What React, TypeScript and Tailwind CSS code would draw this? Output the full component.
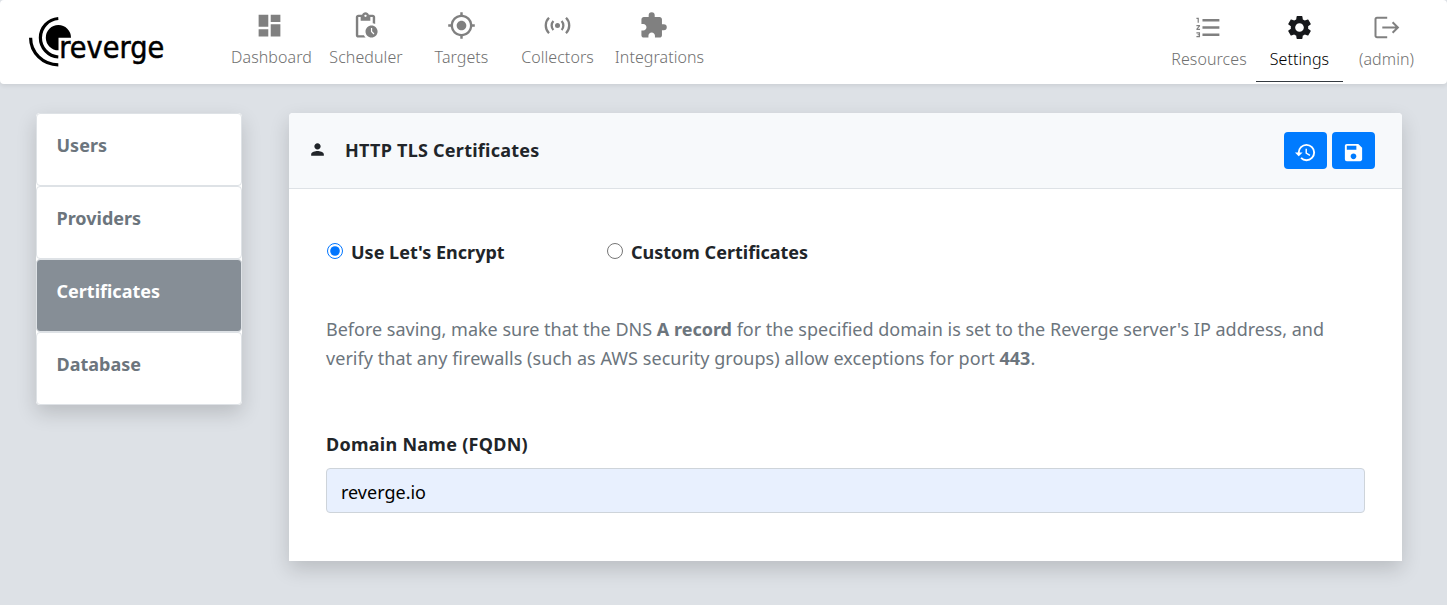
import React, { useState } from 'react';
import {
  MdDashboard,
  MdExtension,
  MdFormatListNumbered,
  MdHistory,
  MdMyLocation,
  MdPendingActions,
  MdPerson,
  MdSave,
  MdSettings,
} from 'react-icons/md';

function Logo() {
  return (
    <svg className="block h-[56px] w-[140px]" viewBox="28 14 140 56" role="img" aria-label="reverge">
      <path d="M58.5 37.7V50.3A12.6 12.6 0 1 1 71 37.7Z" fill="#000" />
      <path d="M58.3 18.5A19.3 19.3 0 0 0 58.3 57" fill="none" stroke="#000" strokeWidth="3.2" />
      <path d="M30.6 37.8A27.7 27 0 0 0 58.3 64.8" fill="none" stroke="#000" strokeWidth="3.2" />
      <text
        x="59.3"
        y="58"
        fontSize="30.5"
        textLength="105"
        lengthAdjust="spacingAndGlyphs"
        stroke="#000"
        strokeWidth="0.5"
        className="font-['DejaVu_Sans_Condensed','DejaVu_Sans',sans-serif]"
      >
        reverge
      </text>
    </svg>
  );
}

function BroadcastIcon() {
  return (
    <svg className="block size-[29px]" viewBox="0 0 29 29" fill="none" stroke="currentColor" strokeWidth="2.3">
      <circle cx="14.5" cy="14.5" r="2.5" fill="currentColor" stroke="none" />
      <path d="M10.4 10a6.6 6.6 0 0 0 0 9M18.6 10a6.6 6.6 0 0 1 0 9" />
      <path d="M6 6.8a10.8 10.8 0 0 0 0 15.4M23 6.8a10.8 10.8 0 0 1 0 15.4" />
    </svg>
  );
}

function SignOutIcon() {
  return (
    <svg className="block size-[29px]" viewBox="0 0 29 29" fill="none" stroke="currentColor" strokeWidth="2">
      <path d="M15.2 4.8H5a1.5 1.5 0 0 0-1.5 1.5v16.4A1.5 1.5 0 0 0 5 24.2h10.2" />
      <path d="M10.3 14.5h15.4M20.6 9.2l5.3 5.3-5.3 5.3" />
    </svg>
  );
}

const leftNav = [
  { label: 'Dashboard', box: 'w-[95px]', icon: <MdDashboard className="mr-1 size-[29px]" /> },
  { label: 'Scheduler', box: 'w-[94px]', icon: <MdPendingActions className="mr-0.5 size-[29px]" /> },
  { label: 'Targets', box: 'w-[97px]', icon: <MdMyLocation className="size-[29px]" /> },
  { label: 'Collectors', box: 'w-[95px]', icon: <BroadcastIcon /> },
  { label: 'Integrations', box: 'w-[109px]', icon: <MdExtension className="mr-3 size-[29px]" /> },
];

const rightNav = [
  { label: 'Resources', box: 'w-[94px]', active: false, icon: <MdFormatListNumbered className="mr-px size-[29px]" /> },
  { label: 'Settings', box: 'w-[87px]', active: true, icon: <MdSettings className="size-[29px]" /> },
  { label: '(admin)', box: 'w-[87px]', active: false, icon: <SignOutIcon /> },
];

const sections = ['Users', 'Providers', 'Certificates', 'Database'];

function Navbar() {
  return (
    <header className="flex h-[84px] justify-between rounded bg-white pr-[17px] pl-[28px] shadow-[0_2px_4px_rgba(0,0,0,0.075)]">
      <div className="flex">
        <div className="w-[196px] pt-[14px]">
          <Logo />
        </div>
        <nav className="flex text-[#808080]">
          {leftNav.map((item) => (
            <a key={item.label} href="#" className={`flex flex-col items-center pt-[11px] ${item.box}`}>
              {item.icon}
              <span className="mt-[5px] text-base leading-6 font-light tracking-[0.07px] text-[#707070]">{item.label}</span>
            </a>
          ))}
        </nav>
      </div>
      <nav className="flex">
        {rightNav.map((item) => (
          <a
            key={item.label}
            href="#"
            className={`flex h-[82px] flex-col items-center border-b pt-[13px] ${item.box} ${
              item.active ? 'border-[#343a40] text-[#16181b]' : 'border-transparent text-[#808080]'
            }`}
          >
            {item.icon}
            <span
              className={`mt-[5px] text-base leading-6 font-light tracking-[0.07px] ${
                item.active ? 'text-black' : 'text-[#707070]'
              }`}
            >
              {item.label}
            </span>
          </a>
        ))}
      </nav>
    </header>
  );
}

function Sidebar() {
  return (
    <aside className="w-[206px] shrink-0 self-start rounded bg-white shadow-[0_8px_20px_rgba(0,0,0,0.16)]">
      {sections.map((name) => (
        <a
          key={name}
          href="#"
          className={`block h-[73px] rounded border border-[#dee2e6] pt-[17px] pl-[19.5px] text-lg leading-7 font-bold ${
            name === 'Certificates' ? 'bg-[#868e96] text-white' : 'bg-white text-[#6c757d]'
          }`}
        >
          {name}
        </a>
      ))}
    </aside>
  );
}

function Certificates() {
  const [mode, setMode] = useState('letsencrypt');
  return (
    <main className="h-[448px] w-[1113px] rounded-t bg-white shadow-[0_8px_20px_rgba(0,0,0,0.16)]">
      <div className="flex h-[76px] items-center rounded-t border-b border-[#dee2e6] bg-[#f7f9fb] pr-[27px] pl-[19px]">
        <MdPerson className="mb-0.5 size-[19px]" />
        <h1 className="mb-0.5 ml-[18px] text-lg leading-7 font-bold tracking-[0.25px]">HTTP TLS Certificates</h1>
        <div className="ml-auto flex gap-[5px] text-white">
          <button className="flex h-[37px] w-[43px] items-center justify-center rounded bg-[#007bff] pt-[3px] pr-px" aria-label="History">
            <MdHistory className="size-[23px]" />
          </button>
          <button className="flex h-[37px] w-[43px] items-center justify-center rounded bg-[#007bff] pt-[3px]" aria-label="Save">
            <MdSave className="size-[23px]" />
          </button>
        </div>
      </div>
      <div className="px-[37px] pt-[49px]">
        <div className="flex h-7 text-lg leading-7 font-bold">
          <label className="flex w-[280px] items-center">
            <input
              type="radio"
              name="mode"
              className="mr-2 mb-0.5 ml-px size-4"
              checked={mode === 'letsencrypt'}
              onChange={() => setMode('letsencrypt')}
            />
            Use Let's Encrypt
          </label>
          <label className="flex items-center">
            <input
              type="radio"
              name="mode"
              className="mr-2 mb-0.5 ml-px size-4"
              checked={mode === 'custom'}
              onChange={() => setMode('custom')}
            />
            Custom Certificates
          </label>
        </div>
        <p className="mt-[49px] text-lg leading-[29px] text-[#6c757d]">
          Before saving, make sure that the DNS <b>A record</b> for the specified domain is set to the Reverge
          server's IP address, and
          <br />
          <span className="tracking-[0.045px]">
            verify that any firewalls (such as AWS security groups) allow exceptions for port <b>443</b>.
          </span>
        </p>
        <label htmlFor="fqdn" className="mt-[57px] block text-lg leading-7 font-bold tracking-[0.27px]">
          Domain Name (FQDN)
        </label>
        <input
          id="fqdn"
          defaultValue="reverge.io"
          className="mt-2.5 block h-[45px] w-full rounded border border-[#ced4da] bg-[#e8f0fe] pt-[3px] pl-3.5 text-lg text-black outline-none"
        />
      </div>
    </main>
  );
}

export default function App() {
  return (
    <div className="h-[605px] w-[1447px] overflow-hidden bg-[#dde1e6] font-['Noto_Sans',sans-serif] text-[#212529]">
      <Navbar />
      <div className="flex gap-[47px] pt-[29px] pl-9">
        <Sidebar />
        <Certificates />
      </div>
    </div>
  );
}
